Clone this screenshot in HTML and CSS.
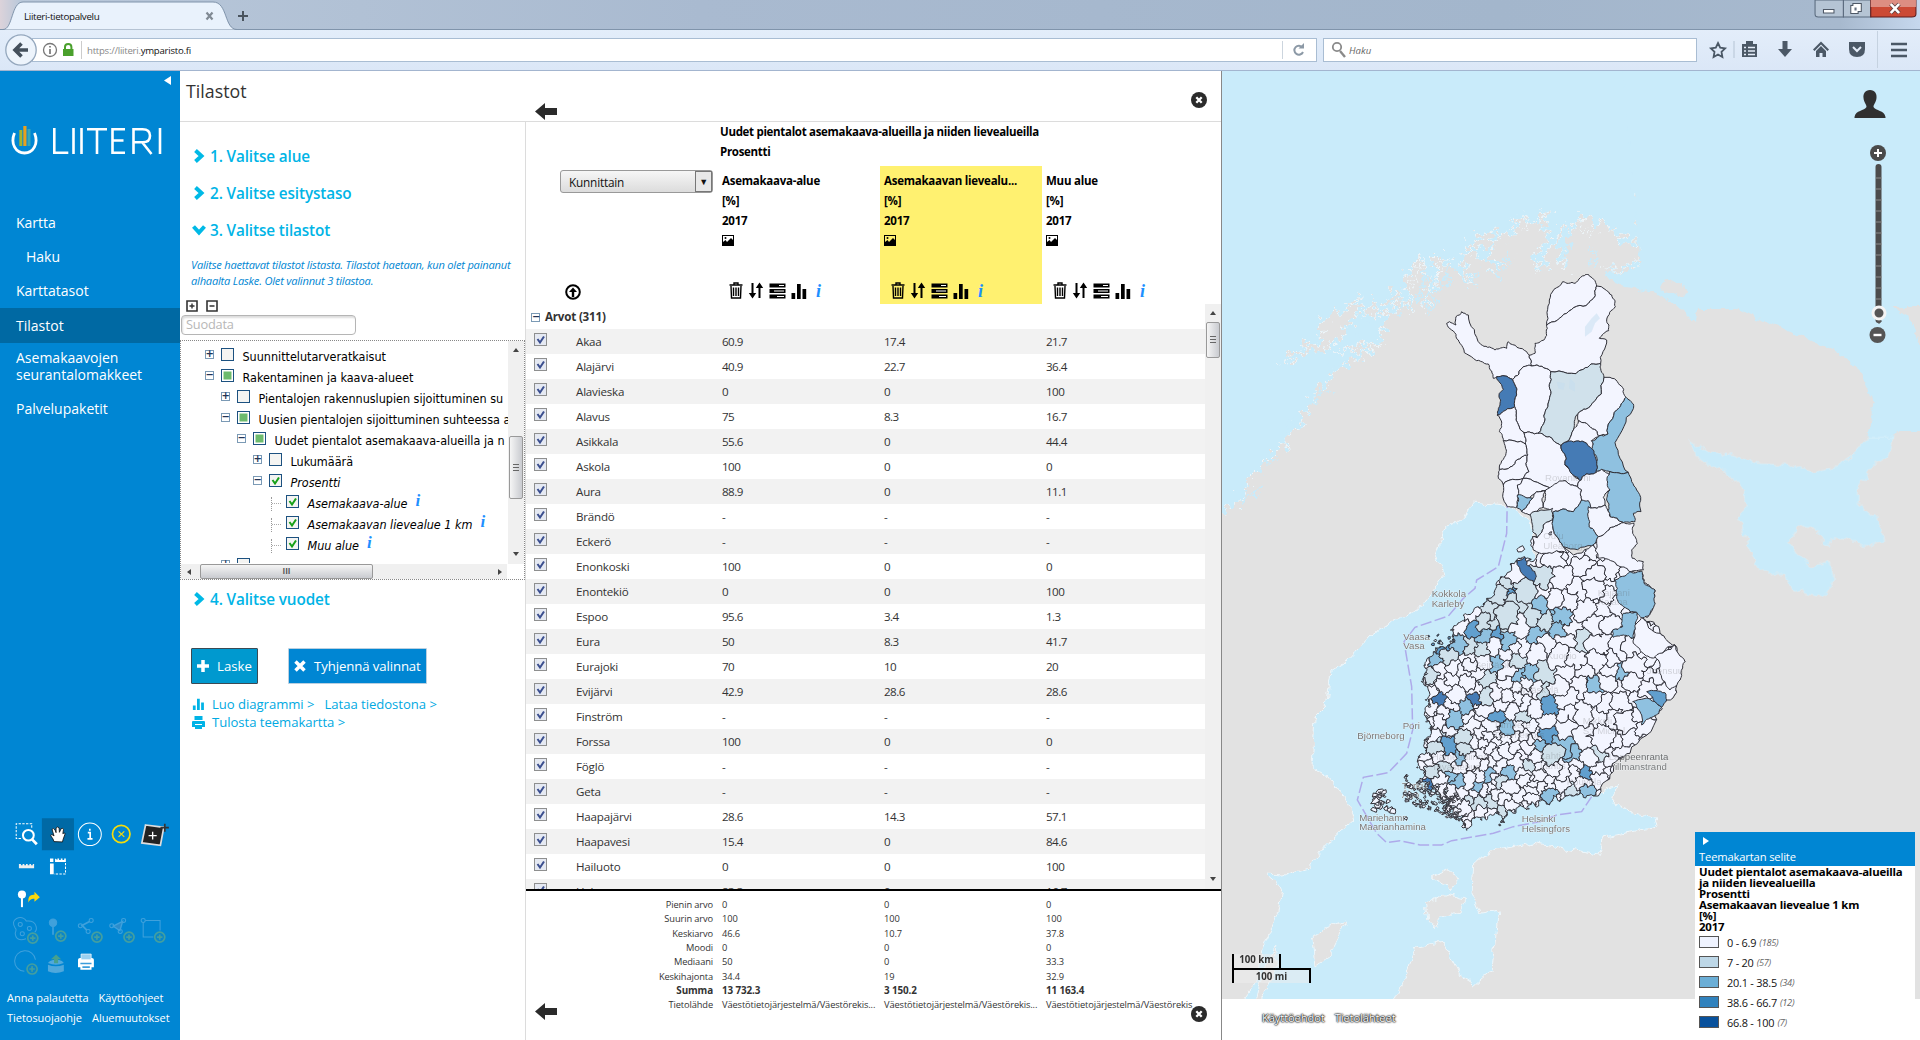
FILE: index.html
```html
<!DOCTYPE html>
<html lang="fi">
<head>
<meta charset="utf-8">
<title>Liiteri-tietopalvelu</title>
<link rel="stylesheet" href="styles.css">
</head>
<body>
<svg width="0" height="0" class="defs">
  <symbol id="i-trash" viewBox="0 0 14 17"><path d="M.5 3h13M5 3V1h4v2M2 4l.5 12h9L12 4M4.500 5.500V14M7 5.500V14M9.500 5.500V14" fill="none" stroke="#000" stroke-width="1.400"/></symbol>
  <symbol id="i-sort" viewBox="0 0 16 17"><path d="M4.500 1v12M11.500 16V4" stroke="#000" stroke-width="2" fill="none"/><path d="M.8 11h7.400L4.500 16.500zM7.800 6h7.400L11.500 .5z"/></symbol>
  <symbol id="i-rows" viewBox="0 0 17 16"><path d="M.5.500h16v4H.5zM.5 6h16v4H.5zM.5 11.500h16v4H.5z"/><path d="M10 2.500h5M5 8h10M8 13.500h7" stroke="#fff" stroke-width="1.200"/></symbol>
  <symbol id="i-bars" viewBox="0 0 16 16"><path d="M.5 10h3.700v6H.5zM6 1h3.700v15H6zM11.500 6h3.700v10h-3.700z"/></symbol>
  <symbol id="i-pic" viewBox="0 0 12 11"><path fill-rule="evenodd" d="M0 0h12v11H0zM1 1v6l2.500-2L5 7l4-4 2 2V1z"/><circle cx="3.500" cy="3" r="1"/></symbol>
  <symbol id="i-left" viewBox="0 0 22 17"><path fill="#2b2b2b" d="M0 8.500L10 0v5h12v7H10v5z"/></symbol>
  <symbol id="i-close" viewBox="0 0 16 16"><circle cx="8" cy="8" r="8" fill="#2b2b2b"/><path d="M5.300 5.300l5.400 5.400M10.700 5.300l-5.400 5.400" stroke="#fff" stroke-width="2.300"/></symbol>
  <symbol id="i-chev" viewBox="0 0 12 14"><path d="M2.500 1.500L8.500 7l-6 5.500" fill="none" stroke="#00b9e6" stroke-width="4"/></symbol>
</svg>
<header class="chrome">
  <div class="tabs">
    <svg class="tabshape" width="240" height="30" viewBox="0 0 240 30"><path d="M-2 29.500H3C13 29.500 11 2 23 2H213C228 2 224 29.500 237 29.500" fill="#e9f2fc" stroke="#8094ab"/><path d="M206.500 12.500l6 7M212.500 12.500l-6 7" stroke="#808a94" stroke-width="2.200"/></svg>
    <span class="tabname">Liiteri-tietopalvelu</span>
    <svg class="plus" width="12" height="12"><path d="M6 1v10M1 6h10" stroke="#4a545e" stroke-width="2"/></svg>
    <svg class="winbtns" width="103" height="18" viewBox="0 0 98 18" preserveAspectRatio="none"><path d="M1 0V14q0 3 3 3H28V0z" fill="#b5c4d4" stroke="#5b6b7e"/><path d="M28 0V17H54V0z" fill="#b5c4d4" stroke="#5b6b7e"/><path d="M54 0V17H93q4 0 4-3V0z" fill="#cc4a35" stroke="#601d1d"/><path d="M54 0H97V7H54z" fill="#dd8e82"/><path d="M9 9.500h10v3.500H9zM37 3.500h8v8h-3v2h-7v-8h2z" fill="#fff" stroke="#4e5866"/><path d="M38.500 7.500h2v3h-2z" fill="#657080"/><path d="M73 4l8 9M81 4l-8 9" stroke="#5b4040" stroke-width="4"/><path d="M73 4l8 9M81 4l-8 9" stroke="#fff" stroke-width="2.600"/></svg>
  </div>
  <div class="bar">
    <div class="urlbar">
      <svg width="64" height="24"><circle cx="17" cy="12" r="6.500" fill="none" stroke="#777" stroke-width="1.300"/><path d="M17 11v5M17 8v1.600" stroke="#777" stroke-width="1.700"/><path d="M30 11h10.500v7H30z" fill="#4aa02c"/><path d="M32 11V9q0-3 3.200-3t3.200 3v2" fill="none" stroke="#4aa02c" stroke-width="2"/><path d="M48.500 3v18" stroke="#ccc"/></svg>
      <span class="url">https://liiteri.<b>ymparisto.fi</b></span>
      <svg class="reload" width="34" height="24"><path d="M.5 3v18" stroke="#ccd5de"/><path d="M20.500 9.500A4.500 4.500 0 1 0 21 14" fill="none" stroke="#8c99a6" stroke-width="2"/><path d="M22 5v5.500h-5.500z" fill="#8c99a6"/></svg>
    </div>
    <div class="search"><svg width="20" height="22"><circle cx="8" cy="8" r="4.200" fill="none" stroke="#8a8a8a" stroke-width="1.800"/><path d="M11 12l5 6" stroke="#8a8a8a" stroke-width="2.400"/></svg><i>Haku</i></div>
    <svg class="baricons" width="216" height="40" viewBox="0 0 216 40"><g fill="#4b5866"><path d="M20 13l2.200 4.600 4.900.7-3.600 3.500.9 5.200-4.400-2.500-4.400 2.500.9-5.200-3.600-3.500 4.900-.7z" fill="none" stroke="#4b5866" stroke-width="1.800"/><path d="M36 11v17" stroke="#b5c4d4"/><path d="M44 14h15v13H44z"/><path d="M48 11h7v4h-7z"/><path d="M46 17.500h2M50 17.500h7M46 21h2M50 21h7M46 24.500h2M50 24.500h7" stroke="#e6eefa" stroke-width="1.600"/><path d="M84.500 11h5v8H94l-7 8-7-8h4.500z"/><path d="M115 19.500l8-8 8 8-1.500 1.500-6.500-6.500-6.500 6.500zM118 21l5-5 5 5v6h-3.500v-4h-3v4H118z"/><path d="M151 12h16v7q0 8-8 8t-8-8z"/><path d="M155 17l4 4 4-4" fill="none" stroke="#e6eefa" stroke-width="2"/><path d="M179.500 1v37" stroke="#c5d2e0"/><path d="M193 14h16M193 20h16M193 26h16" stroke="#4b5866" stroke-width="2.600"/></g></svg>
    <svg class="back" width="34" height="34"><circle cx="17" cy="17" r="15.200" fill="#edf4fc" stroke="#94a7bd" stroke-width="1.300"/><path d="M24 17H13M17.500 10.500L11 17l6.500 6.500" fill="none" stroke="#44505c" stroke-width="3.600"/></svg>
  </div>
</header>
<main class="app">
  <aside class="side">
    <svg class="collapse" width="7" height="9"><path d="M7 0v9L0 4.500z" fill="#fff"/></svg>
    <svg class="logo" width="156" height="32" viewBox="0 0 156 32"><path d="M3.500 8C-1 19 5 28 13.500 28S28 19 23.500 8" fill="none" stroke="#fff" stroke-width="2.800"/><path d="M9.800 5v16" stroke="#a4b431" stroke-width="3"/><path d="M13.900 1v20" stroke="#e8a11d" stroke-width="3.200"/><path d="M18 4v17" stroke="#35a7b8" stroke-width="3"/><g fill="none" stroke="#fff" stroke-width="2.600"><path d="M43.300 3v24.700h14M62.500 3v26M70.500 3v26M76 4.300h20M86 4.300V29M114 4.300h-12.500v23.400H114M101.500 15.500h11M122.500 29V4.300h9q7.500 0 7.500 6.500t-7.500 6.500h-9M131 17l9.500 12M149 3v26"/></g></svg>
    <nav>
      <a>Kartta</a><a class="sub">Haku</a><a>Karttatasot</a><a class="on">Tilastot</a><a class="two">Asemakaavojen<br>seurantalomakkeet</a><a class="last">Palvelupaketit</a>
    </nav>
    <svg class="tools" width="180" height="163" viewBox="0 230 533 490" preserveAspectRatio="none">
      <path d="M124 240h95v96h-95z" fill="#0069a5"/>
      <g fill="none" stroke="#fff" stroke-width="3"><path d="M62 301H48V256h46v14" stroke-dasharray="7 4"/><circle cx="84" cy="291" r="16" stroke-width="6"/><path d="M95 303l14 15" stroke-width="8"/></g>
      <path d="M160 310q-2-8-10-18 2-6 10 1l-6-20q5-5 9 2l3 8v-14q5-6 9 0l1 13 5-11q6-3 7 3l-2 12q8-5 6 3l-5 14-2 8z" fill="#fff" stroke="#111" stroke-width="2.500"/>
      <circle cx="266" cy="288" r="34" fill="none" stroke="#fff" stroke-width="3"/><path d="M260 283h7v19M259 302h15M266 271v6" fill="none" stroke="#fff" stroke-width="5"/>
      <g fill="none" stroke="#f5dc0b" stroke-width="5"><circle cx="359" cy="287" r="26"/><path d="M351 279l17 17M368 279l-17 17" stroke-width="3.500"/></g>
      <path d="M431 260l54 7-10 54-55-7z" fill="#222" stroke="#ddd" stroke-width="5"/><path d="M440 292h24M452 280v24" stroke="#fff" stroke-width="4"/><path d="M475 268h25M488 256v24" stroke="#333" stroke-width="5"/>
      <path d="M56 377v13h45v-13h-4v4h-5v-4h-5v4h-5v-4h-5v4h-5v-4h-5v4h-5v-4z" fill="#eee"/><path d="M148 361h10v10h-10zM163 361v10h32v-10h-5v4h-5v-4h-5v4h-5v-4h-5v4zM148 376v32h11v-32z" fill="#fff"/><path d="M194 374v33h-34" stroke="#fff" stroke-width="3" stroke-dasharray="7 4" fill="none"/>
      <circle cx="65" cy="469" r="12" fill="#fff"/><path d="M65 478v29" stroke="#fff" stroke-width="6"/><path d="M84 493q-3-25 18-23v-9l16 16-16 14v-9q-12-2-18 11z" fill="#f9d80c"/>
      <g stroke="#3fa1dc" stroke-width="3" fill="none"><path d="M77 602q-30 10-32-17 5-12 0-15-12-20 4-29 18-8 29 8 22-3 28 13 5 12-3 20"/><circle cx="60" cy="559" r="6"/><circle cx="87" cy="571" r="6"/><circle cx="66" cy="587" r="6"/><circle cx="157" cy="554" r="11" fill="#3fa1dc"/><path d="M157 560v30" stroke-width="5"/><path d="M265 550l-22 12 14 14" stroke-width="5"/><circle cx="270" cy="547" r="6"/><circle cx="238" cy="563" r="6"/><circle cx="261" cy="580" r="6"/><path d="M363 550l-28 14 20 14z" fill="#2b8ccb" stroke-width="4"/><circle cx="366" cy="547" r="6"/><circle cx="331" cy="563" r="6"/><circle cx="356" cy="580" r="6"/><path d="M430 547h44v30M424 554v43h30"/><circle cx="424" cy="547" r="6"/><path d="M105 665a31 31 0 1 0-33 35"/></g>
      <g stroke="#439fa0" stroke-width="5" fill="#0a86c8"><g id="pl"><circle cx="97" cy="600" r="15"/><path d="M89 600h16M97 592v16"/></g><use href="#pl" x="83" y="-6"/><use href="#pl" x="190" y="-3"/><use href="#pl" x="285" y="-3"/><use href="#pl" x="376" y="-3"/><use href="#pl" x="-2" y="93"/></g>
      <path d="M142 680v20q22 10 47 0v-20q-24 10-47 0zM142 675q5-8 15-9h18q10 1 14 9-24 11-47 0z" fill="#4fa8dc"/><path d="M160 676v-12h-9l15-15 15 15h-9v12z" fill="#46a08e"/>
      <path d="M231 665q0-5 6-5h35q6 0 6 5v23h-7v7h-33v-7h-7z" fill="#fff"/><path d="M240 648h30v17h-30z" fill="#9bd0f0" stroke="#fff" stroke-width="2"/><path d="M238 674h33v5h-33zM244 685h22v5h-22z" fill="#3b9ddb"/>
    </svg>
    <div class="foot"><a>Anna palautetta</a><a>Käyttöohjeet</a></div>
    <div class="foot f2"><a>Tietosuojaohje</a><a>Aluemuutokset</a></div>
  </aside>
  <section class="panel">
    <div class="ptitle"><h1>Tilastot</h1><svg class="pl" width="22" height="17"><use href="#i-left"/></svg><svg class="pc" width="16" height="16"><use href="#i-close"/></svg></div>
    <div class="cols">
      <div class="left">
        <h2 class="s1"><svg width="12" height="14"><use href="#i-chev"/></svg>1. Valitse alue</h2>
        <h2 class="s2"><svg width="12" height="14"><use href="#i-chev"/></svg>2. Valitse esitystaso</h2>
        <h2 class="s3"><svg class="down" width="12" height="14"><use href="#i-chev"/></svg>3. Valitse tilastot</h2>
        <p class="hint">Valitse haettavat tilastot listasta. Tilastot haetaan, kun olet painanut<br>alhaalta Laske. Olet valinnut 3 tilastoa.</p>
        <svg class="pm" width="34" height="12"><path d="M1 1h10v10H1zM21 1h10v10H21z" fill="none" stroke="#333" stroke-width="1.600"/><path d="M3.500 6h5M6 3.500v5M23.500 6h5" stroke="#333" stroke-width="1.400"/></svg>
        <div class="filter">Suodata</div>
        <div class="tree">
          <div class="view">
            <div class="rows" id="tree"></div>
            <div class="vs"><i class="up"></i><b></b><i class="dn"></i></div>
          </div>
          <div class="hs"><i class="lf"></i><b>III</b><i class="rt"></i></div>
        </div>
        <h2 class="s4"><svg width="12" height="14"><use href="#i-chev"/></svg>4. Valitse vuodet</h2>
        <div class="btns"><button class="b1"><svg width="12" height="12"><path d="M6 0v12M0 6h12" stroke="#fff" stroke-width="3.500"/></svg>Laske</button><button class="b2"><svg width="12" height="12"><path d="M1.500 1.500l9 9M10.500 1.500l-9 9" stroke="#fff" stroke-width="3.500"/></svg>Tyhjennä valinnat</button></div>
        <div class="links"><svg width="13" height="12" fill="#00b3e6"><use href="#i-bars"/></svg><a>Luo diagrammi &gt;</a><a class="l2">Lataa tiedostona &gt;</a></div>
        <div class="links"><svg width="13" height="13" viewBox="0 0 13 13" fill="#00b3e6"><path d="M2.500 0h8v4h-8zM1 5h11q1 0 1 1v5H0V6q0-1 1-1z"/><path d="M3 8h7v5H3z"/><path d="M3 8.500h7" stroke="#fff"/></svg><a>Tulosta teemakartta &gt;</a></div>
      </div>
      <div class="right">
        <div class="thead">
          <div class="first"><div class="select">Kunnittain<span>▼</span></div><svg class="upc" width="16" height="16"><circle cx="8" cy="8" r="6.800" fill="none" stroke="#000" stroke-width="2"/><path d="M8 13V6" stroke="#000" stroke-width="2.400"/><path d="M4 8l4-4.500L12 8z"/></svg></div>
          <div class="heads">
            <div class="group">Uudet pientalot asemakaava-alueilla ja niiden lievealueilla<br>Prosentti</div>
            <div class="hrow" id="heads"></div>
          </div>
        </div>
        <div class="tbody">
          <div class="list" id="list"><div class="arvot"><span class="bx">−</span>Arvot (311)</div></div>
          <div class="vs tall"><i class="up"></i><b></b><i class="dn"></i></div>
        </div>
        <div class="stats" id="stats"></div>
        <svg class="bl" width="22" height="17"><use href="#i-left"/></svg><svg class="bc" width="16" height="16"><use href="#i-close"/></svg>
      </div>
    </div>
  </section>
  <section class="map">
    <svg class="geo" width="698" height="928" viewBox="1222 71 698 928">
      <defs><filter id="rough" x="-5%" y="-5%" width="110%" height="110%"><feTurbulence type="fractalNoise" baseFrequency=".11" numOctaves="3" seed="4"/><feDisplacementMap in="SourceGraphic" scale="9" xChannelSelector="R" yChannelSelector="G"/></filter>
      <filter id="fjord" x="-5%" y="-5%" width="110%" height="110%"><feTurbulence type="fractalNoise" baseFrequency=".13" numOctaves="4" seed="8"/><feDisplacementMap in="SourceGraphic" scale="26" xChannelSelector="R" yChannelSelector="G"/></filter></defs>
      <path fill="#e2e2e2" d="M1222 71h698v928h-698z"/>
      <g fill="#c9ebfa" stroke="#eef6fa" stroke-width="1">
        <g filter="url(#fjord)"><path d="M1190 40H1640V274L1600 268 1620 268 1640 263 1645 257 1632 244 1621 236 1610 228 1597 222 1585 218 1575 221 1567 236 1563 270 1557 240 1566 228 1556 232 1545 262 1537 272 1536 258 1548 232 1536 224 1524 225 1508 232 1495 240 1490 256 1499 265 1498 277 1488 262 1478 253 1460 254 1468 274 1478 288 1462 275 1449 262 1438 262 1437 285 1422 311 1430 280 1422 258 1414 275 1408 312 1400 290 1394 290 1388 300 1400 308 1382 312 1385 330 1372 352 1350 362 1330 378 1315 395 1302 420 1280 448 1250 478 1240 500 1222 513H1190z"/>
        <g fill="none" stroke="#c9ebfa" stroke-width="2.500"><path d="M1539 272L1542 250 1554 228M1565 260L1567 234M1594 268L1593 248M1488 252L1499 278M1472 272L1478 288M1430 312L1443 282 1452 262M1417 300L1423 282 1430 262M1392 308L1403 290M1356 335L1370 318M1327 368L1368 348M1287 427L1305 412M1310 405L1330 390M1258 470L1275 460M1238 500L1262 488M1398 318L1412 300M1505 270L1510 248"/></g>
        <g fill="#e2e2e2"><path d="M1282 363L1295 350 1320 341 1323 320 1348 308 1362 297 1358 315 1346 330 1335 342 1320 351 1298 355zM1468 245L1478 238 1492 232 1494 242 1480 250zM1513 223L1522 216 1530 220 1524 228zM1578 228L1580 218 1592 216 1598 226 1590 236zM1538 216L1546 213 1550 222 1542 226zM1432 262L1436 255 1443 262 1440 270zM1335 352L1360 344 1384 343 1372 349zM1366 312L1374 302 1380 306 1374 318zM1404 285L1410 268 1420 260 1418 276 1410 290z"/></g></g>
        <g filter="url(#rough)"><path stroke="none" d="M1620 50H1960V307L1891 307 1908 316 1915 330 1921 348 1960 350V430H1898L1890 445 1866 445 1874 400 1862 373 1836 353 1796 333 1755 317 1737 309 1697 309 1695 323 1675 303 1648 291 1615 284 1604 271 1620 274 1640 267z"/>
        <path fill="#e2e2e2" stroke="none" d="M1661 290L1665 278 1682 284 1687 292 1678 297z"/>
        <path transform="translate(1600 440) scale(.33333)" d="M800-8 882-8 860 50 820 75 775 140 775 190 830 240 855 300 800 320 740 300 700 295 680 320 650 270 590 252 585 290 568 305 590 340 640 380 685 362 700 410 700 440 665 468 580 450 550 400 510 405 465 370 440 300 415 240 435 200 430 140 370 95 300 60 265 0 330 35 400 45 470 70 560 75 640 95 700 85 750 55z"/>
        <path d="M1472 502 1465 518 1445 528 1435 555 1444 575 1422 607 1389 623 1369 637 1345 663 1330 673 1325 707 1315 717 1312 767 1329 777 1347 800 1354 820 1327 843 1309 867 1282 876 1267 875 1282 887 1278 913 1262 950 1258 980 1236 1010H1390L1405 977 1416 948 1443 942 1461 977 1474 985 1492 970 1497 923 1499 910 1481 913 1472 893 1474 860 1497 850 1532 843 1599 855 1604 837 1657 827 1655 817 1635 813 1613 803 1617 783 1600 793 1560 760 1540 600 1530 520 1505 505z"/>
        <path fill="#e2e2e2" d="M1311 940 1320 930 1346 921 1340 935 1330 955 1314 967zM1255 1005 1262 975 1278 946 1274 975 1258 1005zM1425 903 1450 894 1466 898 1460 910 1442 917 1435 928 1428 920zM1433 877 1448 869 1460 878 1450 890z"/></g>
      </g>
      <g id="fin" transform="translate(1340 500) scale(.33333)"></g>
    </svg>
    <div class="scale"><div class="km">100 km</div><div class="mi">100 mi</div></div>
    <div class="terms"><a>Käyttöehdot</a><a>Tietolähteet</a></div>
    <svg class="user" width="32" height="29" viewBox="0 0 32 29"><path d="M16 0c5 0 7 4 6.500 8-.5 5-3 6-3 9 2 4 11 3 12 10v1H.5v-1c1-7 10-6 12-10 0-3-2.500-4-3-9C9 4 11 0 16 0z" fill="#303030"/></svg>
    <svg class="zoomer" width="20" height="200" viewBox="0 0 20 200"><circle cx="9" cy="8" r="8" fill="#4a4a4a"/><path d="M5 8h8M9 4v8" stroke="#fff" stroke-width="2"/><path d="M9.500 22V175" stroke="#4c4c4c" stroke-width="6" stroke-linecap="round"/><path d="M7 33h6m-6 11h6m-6 11h6m-6 11h6m-6 11h6m-6 11h6m-6 11h6m-6 11h6m-6 11h6m-6 11h6m-6 11h6m-6 11h6" stroke="#8a8a8a"/><circle cx="10" cy="168" r="6" fill="#555" stroke="#f4f4f4" stroke-width="3"/><path d="M7 176h6l-3 3z" fill="#555"/><circle cx="8.500" cy="190" r="8" fill="#555"/><path d="M4.500 190h8" stroke="#fff" stroke-width="2.400"/></svg>
    <div class="legend">
      <div class="lt"><i></i>Teemakartan selite</div>
      <p>Uudet pientalot asemakaava-alueilla<br>ja niiden lievealueilla<br>Prosentti<br>Asemakaavan lievealue 1 km<br>[%]<br>2017</p>
      <ul><li><b class="c1"></b>0 - 6.9 <em>(185)</em></li><li><b class="c2"></b>7 - 20 <em>(57)</em></li><li><b class="c3"></b>20.1 - 38.5 <em>(34)</em></li><li><b class="c4"></b>38.6 - 66.7 <em>(12)</em></li><li><b class="c5"></b>66.8 - 100 <em>(7)</em></li></ul>
    </div>
  </section>
</main>
<script src="app.js"></script>
</body>
</html>
```
FILE: styles.css
```css
*{box-sizing:border-box}
body{margin:0;width:1920px;height:1040px;overflow:hidden;font-family:"Open Sans",sans-serif;background:#fff;color:#333}
h1,h2,p,ul{margin:0;padding:0;font-weight:400}
.defs{position:absolute}
.chrome{height:71px;border-bottom:1px solid #a3b5cf;background:linear-gradient(#e9f2fc,#dbe7f7)}
.tabs{height:30px;position:relative;display:flex;align-items:center;background:linear-gradient(90deg,#dcd3da,#b9c8da 20px,#a9bad0 700px,#a3b6cc 1500px,#a7b9ce 1840px,#c6d8ee);border-bottom:1px solid #8094ab}
.tabshape{position:absolute;left:0;top:0}
.tabname{position:relative;margin-left:24px;margin-top:3px;width:213px;font-size:9.800px;letter-spacing:-.35px;color:#111}
.plus{margin-top:2px}
.winbtns{position:absolute;right:3px;top:0}
.bar{position:relative;height:40px;display:flex;align-items:center;padding-left:32px}
.urlbar{display:flex;align-items:center;width:1285px;height:24px;background:#fff;border:1px solid #a9bdd3;font-size:9.600px;letter-spacing:-.25px;color:#888}
.urlbar>svg:first-child{flex:none}
.url{flex:1;margin-left:-10px}
.url b{font-weight:400;color:#111}
.search{display:flex;align-items:center;margin-left:6px;width:374px;height:24px;background:#fff;border:1px solid #a9bdd3;padding-left:5px;font-size:9.600px;color:#666}
.baricons{margin-left:1px}
.back{position:absolute;left:4px;top:3px}
.app{display:flex;height:969px}
.side{width:180px;background:#0086d3;color:#fff;display:flex;flex-direction:column;flex:none}
.collapse{align-self:flex-end;margin:5px 9px 0 0;flex:none}
.logo{margin:40px 0 0 11px;flex:none}
nav{margin-top:48px;font-size:14px;line-height:17px;flex:none;height:530px}
nav a{display:flex;align-items:center;height:34.400px;padding-left:16px}
nav .sub{padding-left:26px}
nav .on{background:#0069a3}
nav .two{height:46px}
nav .last{margin-top:3px}
.tools{flex:none;margin-top:80px}
.foot{display:flex;gap:10px;padding-left:7px;font-size:11px;letter-spacing:-.03px;height:20px;line-height:20px;margin-top:10px;white-space:nowrap;flex:none}
.f2{margin-top:0}
.panel{width:1041px;flex:none;display:flex;flex-direction:column}
.ptitle{position:relative;height:51px;border-bottom:1px solid #dcdcdc;padding:5px 6px}
.ptitle h1{font-size:17.800px;line-height:30px;color:#333}
.pl{position:absolute;left:355px;top:32px}
.pc{position:absolute;left:1011px;top:21px}
.cols{display:flex;height:918px}
.left{width:345px;display:flex;flex-direction:column;flex:none}
.left h2{display:flex;align-items:center;gap:5px;height:38px;padding-left:13px;font-size:15.300px;color:#00b4e6;font-weight:600;flex:none;letter-spacing:-.12px}
.left h2.s1{margin-top:15px;height:37px}
.left h2.s2{height:37px}
.left h2.s3{height:38px}
.left h2.s4{height:38px}
.down{transform:rotate(90deg)}
.hint{padding:8px 0 0 11px;height:51px;font-size:11.100px;line-height:16px;font-style:italic;color:#0086d3;white-space:nowrap;letter-spacing:-.2px}
.pm{margin:0 0 3px 6px;flex:none}
.filter{margin-left:1px;width:175px;height:20px;border:1.500px solid #b5b5b5;border-radius:4px;padding-left:4px;font-size:12.800px;line-height:17px;letter-spacing:-.2px;color:#b7b7b7;box-shadow:inset 1px 2px 2px #ddd;flex:none}
.tree{margin-top:5px;height:240px;border:1px dotted #888;flex:none;width:345px}
.view{display:flex;height:223px}
.rows{flex:1;min-width:0;height:222px;overflow:hidden;font-family:"DejaVu Sans Condensed","DejaVu Sans",sans-serif;font-stretch:condensed;font-size:12.500px;color:#000;padding:5px 0 0 1.500px;letter-spacing:-.02px}
.tr{height:21px;display:flex;align-items:center;white-space:nowrap}
.bx{display:inline-block;width:9px;height:9px;border:1px solid #7b9ab5;font:bold 10px/6px "DejaVu Sans";text-align:center;color:#235;flex:none;margin-top:-5px;letter-spacing:0}
.ck{width:13px;height:13px;border:1px solid #1c5180;background:#f4f4f2;margin:-5px 9px 0 7px;flex:none}
.ck.part{background:#6dbb6d;box-shadow:inset 0 0 0 1.500px #fff}
.ck svg{display:block}
.it{font-style:italic}
.leaf .dots{width:11px;height:14px;border-left:1px dotted #999;flex:none;background:linear-gradient(90deg,#aaa 50%,transparent 50%) 0 6px/2px 1px repeat-x}
.leaf .ck{margin-left:4px}
.inf{font:italic bold 17px/12px "Liberation Serif",serif;color:#1e90ff;margin:-6px 0 0 8px}
.vs{width:16px;background:#f0f0f0;display:flex;flex-direction:column;align-items:center;flex:none}
.vs b{width:14px;height:63px;border:1px solid #999;border-radius:2px;background:linear-gradient(90deg,#f5f5f5,#c9cbd0);margin-top:84px;position:relative}
.vs b:after{content:"";display:block;width:6px;height:8px;margin:27px auto 0;background:repeating-linear-gradient(#666 0 1px,transparent 1px 3px)}
.vs .up,.vs .dn,.hs .lf,.hs .rt{border:3.500px solid transparent;width:0;height:0}
.vs .up{border-bottom:4px solid #444;border-top:0;margin-top:7px}
.vs .dn{border-top:4px solid #444;border-bottom:0;margin-top:auto;margin-bottom:8px}
.tall{height:585px}
.tall b{height:36px;margin-top:7px}
.tall b:after{margin-top:13px}
.hs{display:flex;align-items:center;height:15px;background:#f0f0f0;margin-right:17px}
.hs .lf{border-right:4px solid #444;border-left:0;margin-left:6px}
.hs .rt{border-left:4px solid #444;border-right:0;margin:0 5px 0 auto}
.hs b{margin-left:9px;width:173px;height:15px;border:1px solid #999;border-radius:2px;background:linear-gradient(#f5f5f5,#c9cbd0);font-size:8px;line-height:12px;text-align:center;color:#555}
.btns{display:flex;gap:30px;margin:30px 0 0 11px;height:36px;flex:none}
button{font:13.200px "Open Sans";color:#fff;border:1px solid #3b4a54;background:#0099cf;display:flex;align-items:center;padding:0 5px;gap:8px;white-space:nowrap;border-radius:1px}
.b1{width:67px}.b2{width:139px;background:#0086d3;border-color:#b9cfe0;letter-spacing:-.1px}
.links{display:flex;align-items:center;height:18px;padding-left:12px;font-size:13.100px;color:#00a9e2;flex:none;white-space:nowrap;letter-spacing:-.03px}
.btns+.links{margin-top:11px}
.links a{margin-left:7px}.links .l2{margin-left:10px}
.right{border-left:1px solid #dcdcdc;width:696px;position:relative;display:flex;flex-direction:column;color:#333}
.thead{display:flex;height:182px;flex:none}
.first{width:192px;padding:48px 0 0 34px;position:relative;flex:none}
.select{width:153px;height:23px;border:1px solid #999;border-radius:3px;background:linear-gradient(#f6f6f6,#dcdcdc);font-size:11.800px;line-height:22px;padding-left:8px;color:#111;display:flex;justify-content:space-between;letter-spacing:-.2px}
.select span{width:17px;border:1px solid #777;font-size:9px;line-height:19px;text-align:center;background:#e8e8e8}
.upc{display:block;margin:91px 0 0 5px}
.heads{flex:1;font-size:11.500px;font-weight:700;color:#000}
.group{padding-left:2px;height:44px;line-height:20px;letter-spacing:-.31px}
.hrow{display:flex;height:138px}
.hc{width:162px;padding:5px 0 0 4px;line-height:20px;letter-spacing:-.25px}
.hc.hl{background:#fff170}
.hc>svg{display:block;margin-top:4px}
.ics{display:flex;align-items:center;gap:5px;margin:36px 0 0 7px}
.ics .inf{font-size:18px;margin:0 0 0 4px;line-height:16px}
.tbody{display:flex;height:587px;border-bottom:2px solid #000;flex:none}
.list{flex:1;overflow:hidden;font-size:11.600px}
.arvot{height:25px;line-height:25px;font-weight:700;padding-left:5px;letter-spacing:-.2px}
.arvot .bx{margin:0 5px 0 0;vertical-align:1px}
.row{height:25px;display:grid;grid-template-columns:50px 146px 162px 162px 1fr;line-height:25px;letter-spacing:-.2px}
.row span+span{letter-spacing:-.55px}
.row:nth-child(even){background:#f2f2f2}
.row i{width:13px;height:13px;border:1px solid #8e8f8f;background:#e5e9f2;margin:4px 0 0 8px;display:block}
.row i svg{display:block}
.stats{padding-top:7px;font-size:9.300px}
.st{display:grid;grid-template-columns:187px 9px 162px 162px 1fr;height:14.350px;line-height:14.350px;letter-spacing:-.12px;white-space:nowrap}
.st :first-child{text-align:right;grid-column:1/2}
.st :nth-child(2){grid-column:3}
.st.bold{font-weight:700;font-size:9.900px;line-height:13px}
.bl{position:absolute;left:9px;top:881px}
.bc{position:absolute;left:665px;top:884px}
.map{position:relative;width:699px;border-left:1px solid #888}
.geo{display:block}
.scale{position:absolute;left:10px;top:883px;font-size:9.700px;font-weight:700;line-height:12px;text-align:center}
.km{width:49px;height:14px;border:2px solid #000;border-top:0;border-bottom:0;background:#eeeeee80}
.mi{width:79px;height:15px;border:2px solid #000;border-bottom:0;line-height:14px;background:#eeeeee80}
.terms{display:flex;gap:10px;padding:11px 0 0 40px;font-size:11.200px;color:#fff;text-shadow:0 0 2px #000,0 0 1px #000,0 0 2px #000}
.terms a{letter-spacing:-.13px}
.user{position:absolute;left:632px;top:19px}
.zoomer{position:absolute;left:647px;top:74px}
.legend{position:absolute;left:473px;top:761px;width:220px;height:208px;background:#fff}
.lt{background:#0086d3;color:#fff;height:34px;font-size:11.200px;line-height:15px;padding:2px 4px 0;letter-spacing:-.15px}
.lt i{display:block;margin:3px 0 4px 4px;width:0;height:0;border:4px solid transparent;border-left:6px solid #fff;border-right:0}
.legend p{font-size:11.400px;font-weight:700;color:#000;line-height:11px;padding:0 4px;letter-spacing:-.19px;white-space:nowrap}
.legend ul{list-style:none;padding:0 4px}
.legend li{height:20px;display:flex;align-items:center;font-size:10.900px;letter-spacing:-.2px;color:#111}
.legend li b{width:20px;height:12px;border:1px solid #555;margin-right:8px}
.legend em{font-size:9.200px;color:#666;margin-left:3px;letter-spacing:-.3px}
.c1{background:#eff3ff}.c2{background:#bdd7e7}.c3{background:#6baed6}.c4{background:#3182bd}.c5{background:#08519c}
```
FILE: app.js
```js
const $ = id => document.getElementById(id);
const tick = c => `<svg width="11" height="11"><path d="M2.500 5l2.500 3.500L9 2.500" fill="none" stroke="${c}" stroke-width="2"/></svg>`;

// Statistics tree
const tree = [[22,'+','','Suunnittelutarveratkaisut'],[22,'−','part','Rakentaminen ja kaava-alueet'],[38,'+','','Pientalojen rakennuslupien sijoittuminen su'],
 [38,'−','part','Uusien pientalojen sijoittuminen suhteessa a'],[54,'−','part','Uudet pientalot asemakaava-alueilla ja n'],[70,'+','','Lukumäärä'],[70,'−','on','Prosentti',1],
 [88,'','on','Asemakaava-alue',1],[88,'','on','Asemakaavan lievealue 1 km',1],[88,'','on','Muu alue',1],[38,'+','','']];
$('tree').innerHTML = tree.map(([x,b,k,t,it]) => `<div class="tr ${b?'':'leaf'}" style="padding-left:${x}px">${b?`<span class="bx">${b}</span>`:'<span class="dots"></span>'}<span class="ck ${k}">${k=='on'?tick('#18a018'):''}</span><span class="${it?'it':''}">${t}</span>${b?'':'<span class="inf">i</span>'}</div>`).join('');

// Table
$('heads').innerHTML = ['Asemakaava-alue','Asemakaavan lievealu...','Muu alue'].map((h,i) => `<div class="hc ${i==1?'hl':''}">${h}<br>[%]<br>2017<svg width="12" height="11"><use href="#i-pic"/></svg><div class="ics"><svg width="14" height="17"><use href="#i-trash"/></svg><svg width="16" height="17"><use href="#i-sort"/></svg><svg width="17" height="16"><use href="#i-rows"/></svg><svg width="16" height="16"><use href="#i-bars"/></svg><span class="inf">i</span></div></div>`).join('');
const data = `Akaa|60.9|17.4|21.7
Alajärvi|40.9|22.7|36.4
Alavieska|0|0|100
Alavus|75|8.3|16.7
Asikkala|55.6|0|44.4
Askola|100|0|0
Aura|88.9|0|11.1
Brändö|-|-|-
Eckerö|-|-|-
Enonkoski|100|0|0
Enontekiö|0|0|100
Espoo|95.6|3.4|1.3
Eura|50|8.3|41.7
Eurajoki|70|10|20
Evijärvi|42.9|28.6|28.6
Finström|-|-|-
Forssa|100|0|0
Föglö|-|-|-
Geta|-|-|-
Haapajärvi|28.6|14.3|57.1
Haapavesi|15.4|0|84.6
Hailuoto|0|0|100
Halsua|83.3|0|16.7`.split('\n').map(r => r.split('|'));
$('list').innerHTML += data.map(r => `<div class="row"><i>${tick('#3b4f8f')}</i>${r.map(c=>`<span>${c}</span>`).join('')}</div>`).join('');
const src = 'Väestötietojärjestelmä/Väestörekis';
$('stats').innerHTML = [['Pienin arvo',0,0,0],['Suurin arvo',100,100,100],['Keskiarvo','46.6','10.7','37.8'],['Moodi',0,0,0],['Mediaani',50,0,'33.3'],['Keskihajonta','34.4',19,'32.9'],['Summa','13 732.3','3 150.2','11 163.4'],['Tietolähde',src+'...',src+'...',src]]
 .map(r => `<div class="st ${r[0]=='Summa'?'bold':''}">${r.map(c=>`<span>${c}</span>`).join('')}</div>`).join('');

// Thematic map
const C = {W:'#f3f5ff',P:'#d0e1eb',B:'#8fc1e0',M:'#619fce',D:'#457bb5'};
let seed = 7; const rnd = () => (seed = (seed*16807)%2147483647)/2147483647;
const hash = (a,b,c,d) => { const s = Math.sin(a*12.98+b*78.23+c*37.71+d*9.13)*43758.55; return s-Math.floor(s)-.5; };
function edge(p,q,k,n){
  const l = Math.hypot(q[0]-p[0],q[1]-p[1]);
  if(n==0||l<7) return [q];
  const flip = p[0]>q[0]||(p[0]==q[0]&&p[1]>q[1]), [a,b] = flip?[q,p]:[p,q];
  const h = hash(a[0],a[1],b[0],b[1])*k, m = [Math.round((a[0]+b[0])/2-(b[1]-a[1])*h),Math.round((a[1]+b[1])/2+(b[0]-a[0])*h)];
  return [...edge(p,m,k,n-1),...edge(m,q,k,n-1)];
}
const rough = (pts,k=.35,n=3) => pts.flatMap((p,i) => edge(p,pts[(i+1)%pts.length],k,n));
const d = pts => 'M'+pts.map(p=>p.join(' ')).join('L')+'Z';
const parse = (s,dx=0,dy=0) => s.trim().split(/\s+/).map(t => { const [x,y]=t.split(',').map(Number); return [x+dx,y+dy]; });
const poly = (c,pts) => `<path d="${d(pts)}" fill="${C[c]}"/>`;

const north = [
['W','500,195 508,120 548,65 585,70 625,43 650,78 645,110 625,130 560,160'],
['W','500,195 560,160 625,130 645,110 650,78 695,105 706,140 680,180 686,212 658,235 680,240 662,310 610,328 512,335 455,318 448,285 465,280 465,250 495,235'],
['W','245,155 265,165 302,253 345,270 380,265 385,245 440,275 448,285 455,318 430,320 398,358 350,350 340,355 325,312 280,295 240,250 215,210 200,190 208,185 228,195 228,170'],
['D','350,350 398,358 403,370 404,440 352,466 358,440 358,400 370,388'],
['W','398,358 430,320 455,318 512,335 508,380 513,400 497,450 495,480 473,520 432,518 408,465 404,440 403,370'],
['P','512,335 610,328 662,310 672,352 630,440 595,460 580,510 543,557 508,530 473,520 495,480 497,450 513,400 508,380'],
['W','672,352 715,370 738,412 710,450 684,522 657,530 630,500 595,482 595,460 630,440'],
['B','738,412 760,432 758,450 705,548 745,637 690,635 665,628 648,638 650,605 634,570 634,542 684,522 710,450'],
['W','595,482 630,500 657,530 634,542 634,570 620,550 595,543 555,557 543,557 580,510'],
['W','352,466 404,440 408,465 432,518 437,553 370,542 358,515 365,490'],
['W','370,542 437,553 443,583 410,600 375,628 358,628 378,580'],
['W','358,628 375,628 410,600 443,583 447,635 430,655 370,675 355,655'],
['W','432,518 473,520 508,530 543,557 553,580 555,615 600,662 593,680 555,662 512,685 430,655 447,635 443,583 437,553'],
['D','543,557 595,543 620,550 650,605 648,638 618,642 600,662 570,635 555,615 553,580'],
['W','618,642 648,638 665,628 685,640 690,690 670,712 675,735 625,740 605,720 605,690 593,680 600,662'],
['B','690,635 745,637 770,690 783,755 760,760 765,785 730,788 690,770 680,720 690,690 682,650'],
['W','430,655 512,685 470,695 450,715 410,708 412,675'],
['W','370,675 430,655 412,675 410,742 382,740'],
['W','458,715 470,695 495,692 490,742 450,765 425,755'],
['W','497,690 555,662 593,680 605,690 605,720 580,755 518,757 490,742'],
['B','412,705 458,715 425,755 410,742'],
['P','450,765 518,745 518,780 490,795 472,833 458,815 455,780'],
['W','518,780 520,810 530,830 550,860 560,880 500,880 460,870 458,830 472,833 490,795'],
['B','518,757 580,755 605,720 625,722 628,800 655,830 635,857 550,860 530,830 520,810'],
['W','625,740 675,735 690,770 730,788 690,803 655,830 628,800'],
['W','655,830 690,803 730,788 762,790 758,820 772,850 755,870 757,895 790,905 790,930 750,935 710,915 655,895 650,850']
].map(([c,s]) => [c,parse(s,120,-720)]);

const south = rough(parse('578,110 592,113 610,75 638,60 650,110 670,140 755,137 775,110 770,175 830,195 870,215 905,213 912,250 945,270 945,310 930,340 905,350 960,400 1005,435 1035,485 1020,540 980,600 940,640 870,760 820,815 760,888 720,878 695,888 660,905 640,885 628,915 605,900 590,922 575,905 560,930 540,912 520,940 505,930 485,968 470,935 440,960 410,950 385,985 365,980 380,940 350,952 340,925 315,940 320,910 345,885 300,895 285,865 260,872 265,850 230,850 255,825 235,790 260,750 252,720 272,690 260,650 258,620 265,570 250,540 262,510 260,480 280,455 300,440 340,400 350,375 375,365 370,345 395,340 430,320 440,295 470,260 510,215 530,180 575,185 590,150 575,130'),.6,3);

let pts = `D300,605 D403,602 D256,857 M405,385 M467,408 M518,265 M310,440 M470,645 M330,738 M735,815 M625,622 M617,700 B350,437 B285,485 B432,408 B505,435 B615,320 B660,350 B655,390 B595,408 B470,480 B540,530 B575,525 B765,558 B840,522 B380,620 B340,655 B595,735 B675,735 B705,762 B330,820 B355,845 B415,860 B445,830 B512,820 B740,880 B625,890 B355,770 B505,690 P475,280 P510,245 P548,275 P530,303 P450,335 P470,370 P495,350 P585,350 P620,365 P740,415 P390,440 P425,450 P435,540 P440,590 P270,525 P550,645 P535,480 P610,520 P325,470 P375,720 P375,745 P290,750 P310,800 P275,810 P385,900 P415,910 P455,900 P480,850 P565,800 P780,765 P480,940 P625,765 P620,580 P700,870 P310,710 P610,228 P430,370 W800,540 W715,560 W810,510 W870,545 W845,560 W770,810 W700,825 W745,780 W765,590`
 .split(' ').map(s => [...parse(s.slice(1))[0],s[0]]);
for(let i=0;i<9000;i++){
  const x = 235+rnd()*790, y = 60+rnd()*920;
  let r = y<420 ? 38 : x>620 ? (y<800?37:25) : y>700 ? 22 : 27;
  r *= 1.15+.35*Math.sin(x/31+y/47)*Math.cos(y/37-x/59);
  if(pts.every(p => Math.hypot(p[0]-x,p[1]-y) > r)) pts.push([x,y,'W']);
}
function cell(i){
  let [x,y] = pts[i], pg = [[x-90,y-90],[x+90,y-90],[x+90,y+90],[x-90,y+90]];
  pts.forEach(([u,v],j) => {
    if(i==j||Math.hypot(u-x,v-y)>180) return;
    const mx=(x+u)/2,my=(y+v)/2,nx=u-x,ny=v-y,out=[], f=p=>(p[0]-mx)*nx+(p[1]-my)*ny;
    pg.forEach((p,k) => { const q=pg[(k+1)%pg.length],a=f(p),b=f(q); if(a<=0)out.push(p); if(a*b<0){const t=a/(a-b);out.push([p[0]+(q[0]-p[0])*t,p[1]+(q[1]-p[1])*t]);} });
    pg = out;
  });
  return rough(pg.map(p => p.map(Math.round)),.9,3);
}
const big = [
['B','825,240 870,215 905,213 912,250 945,270 945,310 930,340 905,355 890,337 870,335 850,320 830,290'],
['B','850,340 890,337 893,355 880,415 850,405 820,412 818,390 848,380'],
['W','905,352 960,400 1005,435 950,470 915,465 880,430 885,380'],
['W','1005,435 1035,485 1020,540 990,570 960,520 945,470'],
['M','920,575 975,578 980,600 965,622 945,605'],
['B','878,605 945,605 965,622 940,650 905,675 895,630']];
function isle(x,y,r,c='W'){ const n=5+Math.floor(rnd()*3), o=[]; for(let i=0;i<n;i++){const a=i/n*6.28, q=r*(.3+rnd()*.9); o.push([Math.round(x+Math.cos(a)*q),Math.round(y+Math.sin(a)*q*.8)]);} return poly(c,o); }
let isles = '';
for(let i=0;i<22;i++) isles += isle(95+rnd()*58,875+rnd()*55,4+rnd()*12);
for(let i=0;i<120;i++){ const t=rnd(); isles += isle(195+t*165,865+t*55+(rnd()-.5)*85,2+rnd()*6,rnd()<.4?'P':'W'); }
for(let i=0;i<12;i++) isles += isle(265+rnd()*80,405+rnd()*30,3+rnd()*7,rnd()<.6?'M':'P');
for(let i=0;i<70;i++){ const p = south[Math.floor(south.length*(.42+rnd()*.45))]; isles += isle(p[0]-5+rnd()*8,p[1]+rnd()*8,1+rnd()*4,'P'); }
isles += isle(540,148,14)+isle(563,178,9)+isle(630,100,7)+isle(158,935,12)+isle(197,955,6);

const label = (x,y,...l) => l.map((t,i) => `<text x="${x}" y="${y+i*29}">${t}</text>`).join('');
const outer = label(275,291,'Kokkola','Karleby')+label(190,419,'Vaasa','Vasa')+label(188,687,'Pori')+label(52,718,'Björneborg')+label(186,866,'Turku','Åbo')+label(58,962,'Mariehamn','Maarianhamina')+label(545,967,'Helsinki','Helsingfors')+label(806,780,'Lappeenranta','Villmanstrand');
const inner = label(610,117,'Oulu','Uleåborg')+label(615,-58,'Rovaniemi')+label(773,287,'Kajaani','Kajana')+label(620,476,'Kuopio')+label(920,522,'Joensuu')+label(404,505,'Seinäjoki')+label(530,580,'Jyväskylä')+label(728,672,'Mikkeli','S:t Michel')+label(460,685,'Tampere','Tammerfors')+label(275,781,'Hämeenlinna','Tavastehus')+label(600,777,'Lahti','Lahtis')+label(680,855,'Kouvola');
$('fin').innerHTML = `<clipPath id="sc"><path d="${d(south)}"/></clipPath>
<path d="M502-10 500 100 475 200 410 240 405 265 370 295 325 348 225 382 192 425 215 560 218 690 200 760 145 818 70 832 52 900 110 1000 140 1028 180 1022 240 1035 305 1035 335 1022 460 1000 520 980 600 965 650 945 725 935 755 890" fill="none" stroke="#aeaaea" stroke-width="4.500" stroke-dasharray="34 10"/>
<g font-family="Liberation Sans" font-size="29" fill="#787878" stroke="#f2f7fa" stroke-width="2" paint-order="stroke">${outer}</g>
<g stroke="#303038" stroke-width="3" stroke-linejoin="round"><g clip-path="url(#sc)">${pts.map((p,i)=>poly(p[2],cell(i))).join('')}</g>
<path d="${d(south)}" fill="none"/>${[...north,...big.map(([c,s])=>[c,parse(s)])].map(([c,p])=>poly(c,rough(p,.3,3))).join('')}${poly('D',rough(parse('530,180 555,172 560,195 585,215 583,245 550,225')))}${isles}</g>
<path d="M735-520l20-25 15-15 10 15-15 15-10 25-20 15z M690-365l15 15 0 25-18-10z M650-355l25 5-5 20-15-5z" fill="#c3ddf0" opacity=".5"/>
<g font-family="Liberation Sans" font-size="29" fill="#555" opacity=".22">${inner}${label(806,780,'Lappeenranta')}</g>`;
```
